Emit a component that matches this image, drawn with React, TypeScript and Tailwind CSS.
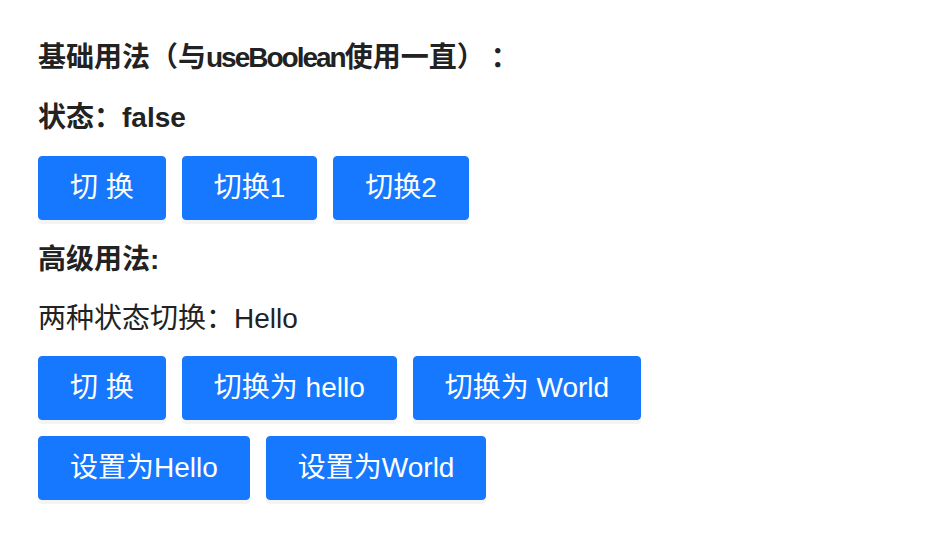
import React, { useState } from 'react';

const font = 'font-["Liberation_Sans","Noto_Sans_CJK_SC",sans-serif]';

const Btn: React.FC<{ label: string; onClick?: () => void }> = ({ label, onClick }) => (
  <button
    onClick={onClick}
    className="h-16 px-[31px] rounded-[4px] border border-[#1677ff] bg-[#1677ff] text-white text-[28px] leading-none shadow-[0_4px_0_rgba(0,0,0,0.045)] whitespace-pre"
  >
    {label}
  </button>
);

const App: React.FC = () => {
  const [state, setState] = useState<boolean>(false);
  const [word, setWord] = useState<string>('Hello');

  return (
    <div
      className={`min-h-screen bg-white pl-[38px] pt-[38px] text-[28px] text-[#222] [text-spacing-trim:space-all] ${font}`}
    >
      <p className="h-10 leading-10 font-bold whitespace-nowrap">
        基础用法（与<span className="tracking-[-2px]">useBoolean</span>使用一直
        <span className="inline-block w-[34px]">）</span>：
      </p>
      <p className="mt-5 h-10 leading-10 font-bold">状态：{String(state)}</p>
      <div className="mt-[18px] flex flex-wrap gap-4">
        <Btn label="切 换" onClick={() => setState(!state)} />
        <Btn label="切换1" onClick={() => setState(true)} />
        <Btn label="切换2" onClick={() => setState(false)} />
      </div>
      <p className="mt-5 h-10 leading-10 font-bold">高级用法:</p>
      <p className="mt-[19px] h-10 leading-10">两种状态切换：{word}</p>
      <div className="mt-[17px] flex flex-col gap-4">
        <div className="flex gap-4">
          <Btn label="切 换" onClick={() => setWord(word === 'Hello' ? 'World' : 'Hello')} />
          <Btn label="切换为 hello" onClick={() => setWord('Hello')} />
          <Btn label="切换为 World" onClick={() => setWord('World')} />
        </div>
        <div className="flex gap-4">
          <Btn label="设置为Hello" onClick={() => setWord('Hello')} />
          <Btn label="设置为World" onClick={() => setWord('World')} />
        </div>
      </div>
    </div>
  );
};

export default App;
